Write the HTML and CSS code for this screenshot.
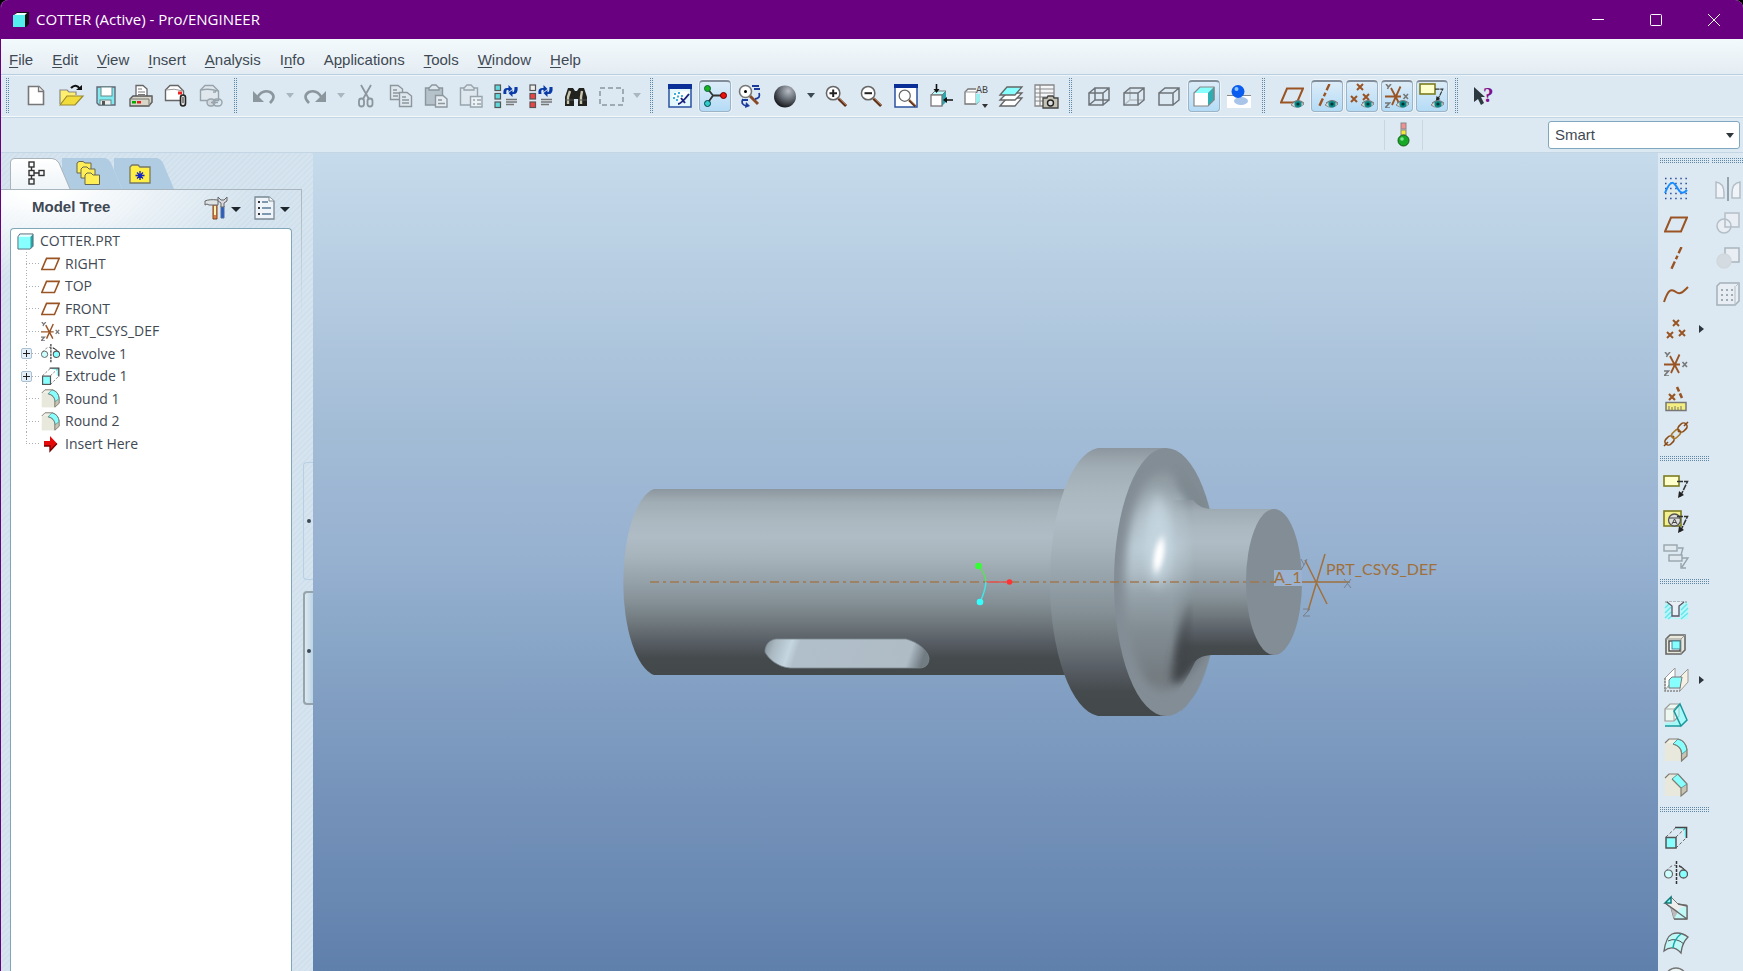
FILE: index.html
```html
<!DOCTYPE html>
<html lang="en">
<head>
<meta charset="utf-8">
<title>COTTER (Active) - Pro/ENGINEER</title>
<link rel="stylesheet" href="styles.css">
</head>
<body>
<svg class="defs" aria-hidden="true">
  <symbol id="eye" viewBox="0 0 14 10"><path d="M0 6Q6-1 13 5Q7 11 0 6Z" fill="#ddd" stroke="#888" /><circle cx="7" cy="5" r="3.6" fill="#0a8a8a"/><circle cx="7" cy="5" r="1.6" fill="#033"/><path d="M1 4Q7-1 13 4" fill="none" stroke="#777"/></symbol>
  <symbol id="plane" viewBox="0 0 24 24"><path d="M7 5.500H23L17 19.500H1Z" fill="none" stroke="#9a5424" stroke-width="2"/></symbol>
  <symbol id="csys" viewBox="0 0 24 24"><g fill="none" stroke="#9a5424" stroke-width="1.800"><path d="M0 12.500H16M6 4L15 21M15.500 2.500L7 21"/></g><g fill="none" stroke="#777" stroke-width="1.600"><path d="M1 0L3.500 3L6 0M3.500 3L2.500 5M18.500 10L23 15M23 10L18.500 15M0 19H4.500L0 24H5"/></g></symbol>
  <symbol id="axis" viewBox="0 0 24 24"><path d="M17.500 0L6.500 24" stroke="#9a5424" stroke-width="2.400" stroke-dasharray="7 2.500 4 2.500 8" fill="none"/></symbol>
  <symbol id="points" viewBox="0 0 24 24"><path d="M9 3L15 9M15 3L9 9M3 15L9 21M9 15L3 21M15 13L21 19M21 13L15 19" stroke="#9a5424" stroke-width="2" fill="none"/></symbol>
  <symbol id="extrude" viewBox="0 0 24 24"><path d="M11 2H22V12L20 10V4Z" fill="#8ff"/><path d="M11 1.500H22.500V12" fill="none" stroke="#444" stroke-width="1.600"/><path d="M2 11L12 1.500M12 11L22 1.500M12 22L22 12" fill="none" stroke="#666" stroke-dasharray="3 2"/><rect x="2" y="11.500" width="10" height="10.500" fill="#8ff" stroke="#555" stroke-width="1.500"/></symbol>
  <symbol id="revolve" viewBox="0 0 24 24"><path d="M2 10Q9 2 13 5Q19 5 23 12" fill="none" stroke="#666" stroke-dasharray="3 2"/><path d="M15 4Q20 6 24 13L20 9Q17 6 15 6Z" fill="#444"/><circle cx="4.500" cy="13" r="4" fill="#cff" stroke="#666" stroke-width="1.200"/><circle cx="19.500" cy="13" r="4" fill="#8ff" stroke="#555" stroke-width="1.300"/><path d="M12.500 0V24" stroke="#333" stroke-width="1.500" stroke-dasharray="3 1"/></symbol>
  <symbol id="round" viewBox="0 0 24 24"><path d="M1 5L5 1H12Q22 3 23 12V18L17 23H1Z" fill="#f0f0e6"/><path d="M1 5H8Q17 8 17 15V23H1Z" fill="#e8e8dc"/><path d="M17 15L23 11V18L17 23Z" fill="#c8c4b4"/><path d="M9 6L14 1Q22 3 23 12L18 16Q17 8 9 6Z" fill="#8ff" stroke="#55a0a0"/><path d="M1 5L5 1H14M9 6Q17 8 17.500 15V23L23 18V12Q22 3 14 1" fill="none" stroke="#807c72" stroke-width="1.200"/></symbol>
  <symbol id="chamfer" viewBox="0 0 24 24"><path d="M1 5L5 1H14L23 11V18L17 23H1Z" fill="#e8e8dc"/><path d="M17 15L23 11V18L17 23Z" fill="#c8c4b4"/><path d="M8 6L14 1L23 11L17 15Z" fill="#8ff" stroke="#55a0a0"/><path d="M1 5L5 1H14L23 11V18L17 23V15L8 6" fill="none" stroke="#807c72" stroke-width="1.200"/></symbol>
  <symbol id="part" viewBox="0 0 18 18"><path d="M14 4L17 1V14L14 17Z" fill="#2aa"/><path d="M1 4L3 1H17L14 4Z" fill="#e8ffff"/><rect x="1" y="4" width="13" height="13" fill="#8ff"/><path d="M1 17V4L3 1H17V14L14 17Z" fill="none" stroke="#567" stroke-width="1"/></symbol>
  <symbol id="lens" viewBox="0 0 24 24"><path d="M14 14L22 22" stroke="#5c3018" stroke-width="3"/><path d="M14 13L22 21" stroke="#b87850" stroke-width="1"/><circle cx="8.500" cy="8.500" r="7" fill="#fff" stroke="#666" stroke-width="1.600"/></symbol>
  <symbol id="arrows" viewBox="0 0 16 14"><path d="M1 10Q0 3 6 4V1L10 5L6 8V6Q3 5 4 10Z M15 3Q16 11 10 10V13L6 9L10 6V8Q12 9 12 3Z" fill="#0a3aa8"/></symbol>
  <symbol id="leader" viewBox="0 0 12 19"><path d="M0 1.500H10.500L3 17" fill="none" stroke="#333" stroke-width="1.500" stroke-dasharray="6 1"/><path d="M1 18L2 11L7 15Z" fill="#222"/></symbol>
</svg>

<div class="app">
<header class="titlebar">
  <svg class="app-icon" viewBox="0 0 18 18"><path d="M2 4L5 1H17V13L14 16H2Z" fill="#111"/><path d="M2 4L5 2H15L13 4Z" fill="#eff"/><rect x="1" y="4" width="12" height="12" fill="#5ee"/></svg>
  <h1 class="title">COTTER (Active) - Pro/ENGINEER</h1>
  <div class="window-controls">
    <button aria-label="Minimize"><svg viewBox="0 0 12 12"><path d="M0 5.500H12"/></svg></button>
    <button aria-label="Maximize"><svg viewBox="0 0 12 12"><rect x=".5" y=".5" width="11" height="11" rx="1"/></svg></button>
    <button aria-label="Close"><svg viewBox="0 0 12 12"><path d="M0 0L12 12M12 0L0 12"/></svg></button>
  </div>
</header>

<nav class="menubar">
  <button><u>F</u>ile</button><button><u>E</u>dit</button><button><u>V</u>iew</button><button><u>I</u>nsert</button><button><u>A</u>nalysis</button><button>I<u>n</u>fo</button><button>A<u>p</u>plications</button><button><u>T</u>ools</button><button><u>W</u>indow</button><button><u>H</u>elp</button>
</nav>

<div class="toolbar" role="toolbar" aria-label="Main toolbar">
  <span class="grip"></span>
  <button class="tool" aria-label="New"><svg viewBox="0 0 24 24"><path d="M4.500 2.500H15L19.500 7V20.500H4.500Z" fill="#fff" stroke="#777" stroke-width="1.600"/><path d="M14.500 2.500V7.500H19.500" fill="#eee" stroke="#777" stroke-width="1.300"/></svg></button>
  <button class="tool" aria-label="Open"><svg viewBox="0 0 24 24"><path d="M1 20V6H8L10 8H17V11" fill="#ffef70" stroke="#888" stroke-width="1.200"/><path d="M1 21L8 12H24L16 21Z" fill="#f2dc3c" stroke="#998a30" stroke-width="1.200"/><path d="M12 4Q17-1 21 5" fill="none" stroke="#111" stroke-width="2.200"/><path d="M17 6H23V1Z" fill="#111"/></svg></button>
  <button class="tool" aria-label="Save"><svg viewBox="0 0 24 24"><path d="M3 3H21V21H5L3 19Z" fill="#7feaf0" stroke="#667" stroke-width="1.400"/><rect x="7" y="3" width="11" height="9" fill="#fff" stroke="#688"/><rect x="6" y="16" width="11" height="5" fill="#eee" stroke="#688"/><rect x="8" y="17" width="3" height="4" fill="#555"/></svg></button>
  <button class="tool" aria-label="Print"><svg viewBox="0 0 24 24"><path d="M7 13V1.500H14L18 5V13Z" fill="#fff" stroke="#666" stroke-width="1.300"/><path d="M9 5H13M9 8H16M9 10.500H16" stroke="#777"/><path d="M1 15L4 12H23V18L20 22H1Z" fill="#d8d6c8" stroke="#555" stroke-width="1.300"/><path d="M1 15H20V22L23 19V12" fill="none" stroke="#777"/><rect x="3" y="17" width="4" height="2.500" fill="#0a0"/><rect x="8" y="17" width="4" height="2.500" fill="#d22"/></svg></button>
  <button class="tool" aria-label="Send with attachment"><svg viewBox="0 0 24 24"><path d="M1.500 6L6 1.500H14L19.500 7V16.500H1.500Z" fill="#fff" stroke="#666" stroke-width="1.400"/><path d="M2 6Q10 4 19 7" fill="none" stroke="#999"/><rect x="14" y="7.500" width="4" height="3" fill="#e22"/><rect x="16.500" y="11" width="5" height="11" rx="2.500" fill="#ddd" stroke="#222" stroke-width="1.600"/><path d="M19 13V19" stroke="#333"/></svg></button>
  <button class="tool" aria-label="Send as link"><svg viewBox="0 0 24 24" fill="none" stroke="#98a4ac" stroke-width="1.400"><path d="M1.500 6L6 1.500H14L19.500 7V16.500H1.500Z" fill="#e0e8ee"/><path d="M2 6Q10 4 19 7M14 8H17"/><rect x="8" y="15" width="8" height="7" rx="3.500" fill="#d0d8de"/><rect x="14" y="15" width="9" height="7" rx="3.500"/><path d="M12 18.500H19"/></svg></button>
  <span class="grip"></span>
  <button class="tool" aria-label="Undo"><svg viewBox="0 0 24 24"><path d="M5 14Q10 5 18 8Q25 12 18 19" fill="none" stroke="#8b969d" stroke-width="2.600"/><path d="M1 7V18H12Z" fill="#8b969d"/></svg></button>
  <button class="drop faded" aria-label="Undo list"></button>
  <button class="tool" aria-label="Redo"><svg viewBox="0 0 24 24"><path d="M19 14Q14 5 6 8Q-1 12 6 19" fill="none" stroke="#8b969d" stroke-width="2.600"/><path d="M23 7V18H12Z" fill="#8b969d"/></svg></button>
  <button class="drop faded" aria-label="Redo list"></button>
  <button class="tool" aria-label="Cut"><svg viewBox="0 0 24 24" fill="none" stroke="#8b969d" stroke-width="1.800"><path d="M7 1L15 15M17 1L9 15"/><rect x="5" y="14.500" width="5" height="8" rx="2.500"/><rect x="13.500" y="14.500" width="5" height="8" rx="2.500"/></svg></button>
  <button class="tool" aria-label="Copy"><svg viewBox="0 0 24 24" fill="#dfe8ee" stroke="#8b969d" stroke-width="1.400"><path d="M1.500 1.500H9L13.500 5V15.500H1.500Z"/><path d="M4 6H8M4 9H10M4 12H9"/><path d="M10.500 8.500H18L22.500 12V22.500H10.500Z"/><path d="M13 13H17M13 16H20M13 19H20"/></svg></button>
  <button class="tool" aria-label="Paste"><svg viewBox="0 0 24 24" fill="#b6c2ca" stroke="#8b969d" stroke-width="1.400"><path d="M1.500 4H18.500V21H1.500Z"/><path d="M5 6V4L8 1H12L15 4V6Z" fill="#dfe8ee"/><path d="M11.500 11.500H19L23 15V23H11.500Z" fill="#e6edf2"/><path d="M14 16H18M14 19.500H21"/></svg></button>
  <button class="tool" aria-label="Paste special"><svg viewBox="0 0 24 24" fill="#dfe8ee" stroke="#98a4ac" stroke-width="1.400"><path d="M1.500 4H18.500V21H1.500Z"/><path d="M5 6V4L8 1H12L15 4V6Z"/><path d="M11.500 12.500H23V23H11.500Z" fill="#edf2f6"/><path d="M14 16H16M18 16H22M14 20H16M18 20H22"/></svg></button>
  <button class="tool" aria-label="Regenerate"><svg viewBox="0 0 24 24"><g fill="#5fd8dc" stroke="#555" stroke-width="1.200"><rect x="1" y="1" width="5.500" height="5.500"/><rect x="1" y="9.500" width="5.500" height="5.500"/><rect x="1" y="18" width="5.500" height="5.500"/></g><use href="#arrows" x="8" y="0" width="17" height="14"/><path d="M12 15.500H23M12 18H23M12 20.500H20" stroke="#777" stroke-width="1.300"/></svg></button>
  <button class="tool" aria-label="Custom regenerate"><svg viewBox="0 0 24 24"><g stroke="#555" stroke-width="1.200"><rect x="1" y="1" width="5.500" height="5.500" fill="#eee"/><rect x="1" y="9.500" width="5.500" height="5.500" fill="#e44"/><rect x="1" y="18" width="5.500" height="5.500" fill="#e44"/></g><use href="#arrows" x="8" y="0" width="17" height="14"/><path d="M12 15.500H23M12 18H23M12 20.500H20" stroke="#777" stroke-width="1.300"/></svg></button>
  <button class="tool" aria-label="Find"><svg viewBox="0 0 24 24"><path d="M1 22V13L4 4H9L11 7H13L15 4H20L23 13V22H14V15H10V22Z" fill="#22221e"/><path d="M4 20V13L6 7M17 20V13L18 7" stroke="#c9c7b0" stroke-width="2.400" fill="none"/><path d="M1 16H10M14 16H23" stroke="#555"/></svg></button>
  <button class="tool" aria-label="Select"><svg viewBox="0 0 24 24"><rect x="1" y="4" width="23" height="17" fill="none" stroke="#8b969d" stroke-width="1.500" stroke-dasharray="5 3"/></svg></button>
  <button class="drop faded" aria-label="Selection list"></button>
  <span class="grip"></span>
  <button class="tool" aria-label="Repaint"><svg viewBox="0 0 24 24"><rect x="1" y="1" width="22" height="22" fill="#e4f7fc" stroke="#2a52a0" stroke-width="1.500"/><path d="M0 0H24V5H0Z" fill="#0a3098"/><path d="M5 9Q14 6 21 8L19 12L12 21Q8 13 4 15Z" fill="#fff"/><path d="M6 10h2M10 9h2M9 12.500h2M5 14h2M8 16h2M13 12h2" stroke="#3ab0e0" stroke-width="1.800"/><path d="M10 20Q13 20 21 10M13 14L17 19" fill="none" stroke="#1a2480" stroke-width="2"/></svg></button>
  <button class="tool on" aria-label="Spin center" aria-pressed="true"><svg viewBox="0 0 24 24"><path d="M4 4L10 11.500L4 20M10 11.500H20" fill="none" stroke="#333" stroke-width="1.800"/><circle cx="4.500" cy="4.500" r="3" fill="#1cb21c" stroke="#064" /><circle cx="4.500" cy="19.500" r="3" fill="#3cc" stroke="#044"/><circle cx="20.500" cy="11.500" r="3" fill="#e11" stroke="#600"/></svg></button>
  <button class="tool" aria-label="Orient mode"><svg viewBox="0 0 24 24"><path d="M12 12L20 20" stroke="#8a4a28" stroke-width="3"/><circle cx="7.500" cy="7.500" r="6" fill="#fff" stroke="#777" stroke-width="1.600"/><circle cx="7.500" cy="7.500" r="1.500"/><path d="M14 2H21M16 5H22M21 9Q23 14 17 15M5 15Q2 20 8 22M5 16H10" fill="none" stroke="#1a3a9c" stroke-width="1.800"/><path d="M8 18L12 22L7 24Z" fill="#1a3a9c"/></svg></button>
  <button class="tool" aria-label="Appearance gallery"><svg viewBox="0 0 24 24"><defs><radialGradient id="ball" cx=".65" cy=".25" r=".8"><stop offset="0" stop-color="#b8bec4"/><stop offset=".5" stop-color="#666c74"/><stop offset="1" stop-color="#101216"/></radialGradient></defs><circle cx="12" cy="12.500" r="11" fill="url(#ball)"/></svg></button>
  <button class="drop" aria-label="Appearance list"></button>
  <button class="tool" aria-label="Zoom in"><svg viewBox="0 0 24 24"><use href="#lens" x="1" y="1" width="23" height="23"/><path d="M5.500 9.200H13M9.200 5.500V13" stroke="#222" stroke-width="2"/></svg></button>
  <button class="tool" aria-label="Zoom out"><svg viewBox="0 0 24 24"><use href="#lens" x="1" y="1" width="23" height="23"/><path d="M5.500 9.200H13" stroke="#222" stroke-width="2"/></svg></button>
  <button class="tool" aria-label="Refit"><svg viewBox="0 0 24 24"><rect x="1" y="1" width="22" height="22" fill="#fff" stroke="#2a52a0" stroke-width="1.500"/><path d="M0 0H24V4H0Z" fill="#0a3098"/><use href="#lens" x="4" y="5" width="19" height="19"/></svg></button>
  <button class="tool" aria-label="Reorient"><svg viewBox="0 0 24 24"><path d="M13 11L17 7V18L13 22" fill="#2aa8b0"/><path d="M2 11L6 7H17L13 11Z" fill="#bff" stroke="#777"/><rect x="2" y="11" width="11" height="11" fill="#fff" stroke="#777" stroke-width="1.300"/><path d="M7.500 0V7M24 16H17" stroke="#111" stroke-width="1.600"/><path d="M4.500 5H10.500L7.500 9ZM18 13V19L14 16Z" fill="#111"/></svg></button>
  <button class="tool" aria-label="Saved view list"><svg viewBox="0 0 24 24"><path d="M1 8L4 5H15V17L12 20H1Z" fill="#fff" stroke="#777" stroke-width="1.300"/><path d="M1 8H12V20" fill="none" stroke="#999"/><path d="M12 8L16 6V17L12 20Z" fill="#9ee"/><rect x="12" y="0" width="13" height="10" fill="#dce9f2"/><text x="12" y="9" class="ab">AB</text><path d="M18 20H24L21 24Z" fill="#333"/></svg></button>
  <button class="tool" aria-label="Layers"><svg viewBox="0 0 24 24" stroke="#666" stroke-width="1.300" fill="#fff"><path d="M1 22L8 14H23L16 22Z"/><path d="M1 16L8 9H23L16 16Z"/><path d="M1 11L8 3H23L16 11Z" fill="#8ff"/></svg></button>
  <button class="tool" aria-label="View manager"><svg viewBox="0 0 24 24"><path d="M1 1H20V22H1Z" fill="#f4f6f8" stroke="#888" stroke-width="1.300"/><path d="M6 1V22M1 5H20M1 9H20M1 13H20M1 17H20" stroke="#888" stroke-width="1.200"/><path d="M9 14H13L14 12H19L20 14H24V24H9Z" fill="#c4c2b4" stroke="#444" stroke-width="1.300"/><circle cx="16.500" cy="19" r="3" fill="#ddd" stroke="#222" stroke-width="1.400"/></svg></button>
  <span class="grip"></span>
  <button class="tool" aria-label="Wireframe"><svg viewBox="0 0 24 24" fill="none" stroke="#6d747a" stroke-width="1.500"><path d="M2 9H16V21H2ZM8 4H22V16H8ZM2 9L8 4M16 9L22 4M16 21L22 16M2 21L8 16"/></svg></button>
  <button class="tool" aria-label="Hidden line"><svg viewBox="0 0 24 24" fill="none" stroke="#6d747a" stroke-width="1.500"><path d="M8 4V16H22M2 21L8 16" stroke="#b4bcc2"/><path d="M2 9H16V21H2ZM2 9L8 4H22V16L16 21M16 9L22 4"/></svg></button>
  <button class="tool" aria-label="No hidden"><svg viewBox="0 0 24 24" fill="none" stroke="#6d747a" stroke-width="1.500"><path d="M2 9H16V21H2ZM2 9L8 4H22V16L16 21M16 9L22 4"/></svg></button>
  <button class="tool on" aria-label="Shading" aria-pressed="true"><svg viewBox="0 0 24 24"><path d="M16 9L22 3V16L16 22" fill="#2ab0b4" stroke="#777"/><path d="M2 9L8 3H22L16 9Z" fill="#8ff"/><path d="M2 9H16V22H2Z" fill="#fff"/><path d="M2 9L8 3H22V16L16 22H2Z" fill="none" stroke="#888" stroke-width="1.200"/></svg></button>
  <button class="tool" aria-label="Enhanced realism"><svg viewBox="0 0 24 24"><path d="M0 12H24V24H0Z" fill="#fff"/><path d="M0 11.500H24" stroke="#888"/><ellipse cx="14" cy="17" rx="7" ry="4" fill="#a8c4e8"/><circle cx="11" cy="7.500" r="6.500" fill="#0a5cf0"/><circle cx="9.500" cy="5" r="2" fill="#8cc8ff"/></svg></button>
  <span class="grip"></span>
  <button class="tool" aria-label="Plane display"><svg viewBox="0 0 24 24"><use href="#plane" x="0" y="-1" width="24" height="24"/><use href="#eye" x="11" y="15" width="14" height="10"/></svg></button>
  <button class="tool on" aria-label="Axis display" aria-pressed="true"><svg viewBox="0 0 24 24"><use href="#axis" x="-3" y="0" width="24" height="24"/><use href="#eye" x="10" y="15" width="14" height="10"/></svg></button>
  <button class="tool on" aria-label="Point display" aria-pressed="true"><svg viewBox="0 0 24 24"><use href="#points" x="-2" y="-3" width="24" height="24"/><use href="#eye" x="11" y="15" width="14" height="10"/></svg></button>
  <button class="tool on" aria-label="Coordinate system display" aria-pressed="true"><svg viewBox="0 0 24 24"><use href="#csys" x="0" y="0" width="24" height="24"/><use href="#eye" x="11" y="15" width="14" height="10"/></svg></button>
  <button class="tool on" aria-label="Annotation display" aria-pressed="true"><svg viewBox="0 0 24 24"><rect x="0" y="0" width="15" height="10" fill="#ffc" stroke="#7c7c20" stroke-width="1.600"/><use href="#leader" x="14" y="4" width="11" height="14"/><use href="#eye" x="11" y="15" width="14" height="10"/></svg></button>
  <span class="grip"></span>
  <button class="tool" aria-label="Context help"><svg viewBox="0 0 24 24"><path d="M1 3V18L5 15L8 21L11 19L8 13H12Z" fill="#2c3a40"/><text x="10" y="18" class="qmark">?</text></svg></button>
</div>

<div class="messagebar">
  <div class="status"><svg viewBox="0 0 14 26"><rect x="4" y="1" width="5" height="6" fill="#f09090" stroke="#888"/><rect x="4" y="8" width="5" height="5" fill="#f4e830" stroke="#888"/><circle cx="6.500" cy="18.500" r="5.500" fill="#18a828" stroke="#145c18"/><circle cx="5" cy="17" r="1.800" fill="#7ce88c"/></svg></div>
  <div class="filter"><select aria-label="Selection filter"><option>Smart</option></select></div>
</div>

<main class="workspace">
  <aside class="navigator">
    <div class="tabs" role="tablist">
      <button class="tab selected" role="tab" aria-label="Model tree"><svg class="tab-shape" viewBox="0 0 58 31"><path d="M.5 31V5Q.5 .5 5 .5H42Q46 .5 49 5L60 31" fill="url(#tabfill)" stroke="#a9b3ba"/><defs><linearGradient id="tabfill" x1="0" y1="0" x2="0" y2="1"><stop offset="0" stop-color="#fff"/><stop offset="1" stop-color="#eef4f8"/></linearGradient></defs></svg><svg class="tab-icon" viewBox="0 0 24 24" fill="none" stroke="#333" stroke-width="1.400"><rect x="5" y="1" width="5" height="5"/><rect x="5" y="9.500" width="5" height="5"/><rect x="5" y="18" width="5" height="5"/><rect x="15" y="9.500" width="5" height="5"/><path d="M7.500 6V9.500M7.500 14.500V18M10 12H15"/></svg></button>
      <button class="tab" role="tab" aria-label="Folder browser"><svg class="tab-shape" viewBox="0 0 58 31"><path d="M0 0H42Q46 0 49 5L60 31H8L0 12Z" fill="#b0cce2"/></svg><svg class="tab-icon" viewBox="0 0 24 24" fill="#ffee55" stroke="#665" stroke-width="1"><path d="M1 2L3 .500H7L9 2H15V12H1Z"/><path d="M5 8L7 6H11L13 8H19V17H5Z"/><path d="M9 14L11 12H15L17 14H23.500V23.500H9Z"/></svg></button>
      <button class="tab" role="tab" aria-label="Favorites"><svg class="tab-shape" viewBox="0 0 58 31"><path d="M0 0H42Q46 0 49 5L60 31H8L0 12Z" fill="#b0cce2"/></svg><svg class="tab-icon" viewBox="0 0 24 24"><path d="M2 22V6L4 4H10L12 6H22V22Z" fill="#ffee44" stroke="#776" stroke-width="1.300"/><path d="M12 10V19M7.500 14.500H16.500M9 11.500L15 17.500M15 11.500L9 17.500" stroke="#1424c0" stroke-width="1.300"/></svg></button>
    </div>
    <section class="panel">
      <div class="panel-head">
        <h2>Model Tree</h2>
        <button class="head-tool" aria-label="Settings"><svg viewBox="0 0 24 24"><path d="M9 8H13V23H9Z" fill="#e08040" stroke="#7a4020"/><path d="M11 10V19" stroke="#fff0b0" stroke-width="2"/><path d="M1 5Q5 3 14 4V9H5Q3 7 1 9Z" fill="#dde2e4" stroke="#666"/><path d="M17 10H20V22H17Z" fill="#2a5cc0" stroke="#4a6ca0"/><path d="M14 1V5L17 7V11H20V7L23 5V1L20 4H17Z" fill="#d8d8e0" stroke="#666"/></svg></button>
        <button class="drop dark" aria-label="Settings menu"></button>
        <button class="head-tool list" aria-label="Show"><svg viewBox="0 0 24 24"><path d="M2 1H16L21 5V23H2Z" fill="#eef4fa" stroke="#7a8894" stroke-width="1.300"/><path d="M16 1V5H21" fill="#fff" stroke="#7a8894"/><path d="M5 6H7M5 12H7M5 18H7" stroke="#333" stroke-width="2.200"/><path d="M9 6H15M9 12H18M9 18H18" stroke="#5a7a98" stroke-width="1.300"/></svg></button>
        <button class="drop dark" aria-label="Show menu"></button>
      </div>
      <ul class="tree">
        <li class="root"><svg class="ti" viewBox="0 0 18 18"><use href="#part"/></svg>COTTER.PRT</li>
        <li><svg class="ti"><use href="#plane"/></svg>RIGHT</li>
        <li><svg class="ti"><use href="#plane"/></svg>TOP</li>
        <li><svg class="ti"><use href="#plane"/></svg>FRONT</li>
        <li><svg class="ti"><use href="#csys"/></svg>PRT_CSYS_DEF</li>
        <li><button class="expand" aria-label="Expand Revolve 1"></button><svg class="ti"><use href="#revolve"/></svg>Revolve 1</li>
        <li><button class="expand" aria-label="Expand Extrude 1"></button><svg class="ti"><use href="#extrude"/></svg>Extrude 1</li>
        <li><svg class="ti"><use href="#round"/></svg>Round 1</li>
        <li><svg class="ti"><use href="#round"/></svg>Round 2</li>
        <li class="last"><svg class="ti" viewBox="0 0 19 19"><path d="M3 7H9V2L16 9.500L9 17V12H3Z" fill="#e40a0a"/><path d="M3 12H9V17L16 9.500" fill="none" stroke="#700" stroke-width="1.300"/></svg>Insert Here</li>
      </ul>
    </section>
    <div class="splitter"><button class="handle" aria-label="Collapse navigator"></button><button class="handle strong" aria-label="Open browser"></button></div>
  </aside>

  <section class="viewport" aria-label="Model view">
    <svg class="scene" viewBox="313 153 1345 818">
      <defs>
        <linearGradient id="barrel" x1="0" y1="0" x2="0" y2="1">
          <stop offset="0" stop-color="#8c969e"/><stop offset=".07" stop-color="#a1adb4"/><stop offset=".17" stop-color="#abb8c0"/><stop offset=".26" stop-color="#afbcc6"/><stop offset=".36" stop-color="#a7b4bb"/><stop offset=".5" stop-color="#95a1a8"/><stop offset=".61" stop-color="#849096"/><stop offset=".72" stop-color="#6f787c"/><stop offset=".82" stop-color="#585e65"/><stop offset=".91" stop-color="#454a4d"/><stop offset="1" stop-color="#43484b"/>
        </linearGradient>
        <linearGradient id="slot" x1="0" y1="0" x2="1" y2=".06">
          <stop offset="0" stop-color="#828e96"/><stop offset=".07" stop-color="#a9b8c1"/><stop offset=".17" stop-color="#c5d6e1"/><stop offset=".22" stop-color="#b1bfca"/><stop offset=".91" stop-color="#afbcc6"/><stop offset="1" stop-color="#717b82"/>
        </linearGradient>
        <linearGradient id="bell" gradientUnits="userSpaceOnUse" x1="0" y1="460" x2="0" y2="704">
          <stop offset="0" stop-color="#838d95"/><stop offset=".12" stop-color="#97a3aa"/><stop offset=".24" stop-color="#b2c0c9"/><stop offset=".36" stop-color="#bccdd7"/><stop offset=".46" stop-color="#b0bec7"/><stop offset=".54" stop-color="#98a5ac"/><stop offset=".7" stop-color="#818c92"/><stop offset=".9" stop-color="#737b80"/><stop offset="1" stop-color="#838d95"/>
        </linearGradient>
        <linearGradient id="fade" gradientUnits="userSpaceOnUse" x1="1172" y1="0" x2="1194" y2="0"><stop offset="0" stop-color="#000"/><stop offset="1" stop-color="#fff"/></linearGradient>
        <mask id="neckmask" maskUnits="userSpaceOnUse" x="1160" y="480" width="150" height="200"><rect x="1160" y="480" width="150" height="200" fill="url(#fade)"/></mask>
        <filter id="b3" x="-80%" y="-50%" width="260%" height="200%"><feGaussianBlur stdDeviation="2 4"/></filter>
        <filter id="b4" x="-50%" y="-50%" width="200%" height="200%"><feGaussianBlur stdDeviation="4"/></filter>
        <filter id="b6" x="-80%" y="-50%" width="260%" height="200%"><feGaussianBlur stdDeviation="5 8"/></filter>
        <clipPath id="face"><path d="M1166 448A52 134 0 0 0 1166 716C1184 716 1200 696 1210 657L1210 509C1200 470 1184 448 1166 448Z"/></clipPath>
      </defs>
      <path d="M654 489H1070V675H654A36 94 0 0 1 654 489Z" fill="url(#barrel)"/>
      <path d="M776 639H906C918 642 928 651 929 658C929 664 926 668 919 668H790C777 667 768 658 765 652C765 645 769 640 776 639Z" fill="url(#slot)" stroke="#7e8a91" stroke-width=".8"/>
      <path d="M1098 448H1166V716H1098A52 134.400 0 0 1 1098 448Z" fill="url(#barrel)"/>
      <ellipse cx="1166" cy="582" rx="52" ry="134" fill="#838d95"/>
      <g clip-path="url(#face)">
        <ellipse cx="1163" cy="582" rx="38" ry="110" fill="url(#bell)" filter="url(#b4)"/>
        <ellipse cx="1158" cy="540" rx="13" ry="44" fill="#c8d9e3" opacity=".75" filter="url(#b6)"/>
        <path d="M1180 470L1205 500V512H1194Q1184 496 1176 486Z" fill="#7c878e" opacity=".8" filter="url(#b4)"/>
        <path d="M1192 602C1182 622 1170 664 1172 682C1180 688 1196 668 1208 650V602Z" fill="#404548" filter="url(#b4)"/>
        <path d="M1210 655Q1200 655 1195 662Q1184 686 1170 700L1182 712L1214 670Z" fill="#838d95" opacity=".7"/>
      </g>
      <path d="M1160 500H1193Q1200 509 1212 509H1274V655H1212Q1202 655 1194 661H1160Z" fill="url(#barrel)" mask="url(#neckmask)"/>
      <ellipse cx="1159" cy="555" rx="5" ry="17" fill="#fff" transform="rotate(10 1159 555)" filter="url(#b3)"/>
      <ellipse cx="1274" cy="582" rx="28" ry="73" fill="#838d95"/>
      <rect x="1274" y="570" width="28" height="16" fill="#9ab2cf"/>
      <path d="M650 582H1276" stroke="#a07850" stroke-width="1.600" stroke-dasharray="9 4 3 4" fill="none"/>
      <text x="1274" y="583" class="note">A_1</text>
      <path d="M1302 582H1350M1305 560L1327 604M1325 554L1308 611" fill="none" stroke="#a0703c" stroke-width="1.500"/>
      <g fill="none" stroke="#78808c" stroke-width="1"><path d="M1301 559L1304 565L1307 559M1304 565L1301 570M1344 579L1351 588M1351 579L1344 588M1303 609H1310L1303 616H1310"/></g>
      <text x="1326" y="575" class="note">PRT_CSYS_DEF</text>
      <g fill="none" stroke-width="1.500"><path d="M978 566Q985 572 986 582" stroke="#5be05b"/><path d="M986 582H1009" stroke="#e05858"/><path d="M986 582Q985 592 980 602" stroke="#40e8e8"/></g>
      <circle cx="978.500" cy="566" r="3.300" fill="#3f3"/><circle cx="1009.500" cy="582" r="2.800" fill="#f33"/><circle cx="980" cy="602" r="3.300" fill="#3ff"/>
    </svg>
  </section>

  <aside class="feature-tools">
    <div class="column" role="toolbar" aria-label="Feature toolbar">
      <span class="grip-h"></span>
      <button class="tool" aria-label="Sketch"><svg viewBox="0 0 24 24"><path d="M1 1.500H23M1 6.500H23M1 11.500H23M1 16.500H23M1 21.500H23" stroke="#2a4a9c" stroke-width="1.500" stroke-dasharray="1.500 3.600"/><path d="M1 16C7 1 10 5 14 12Q18 19 23 13" fill="none" stroke="#1a8cff" stroke-width="2"/></svg></button>
      <button class="tool" aria-label="Datum plane"><svg><use href="#plane"/></svg></button>
      <button class="tool" aria-label="Datum axis"><svg><use href="#axis"/></svg></button>
      <button class="tool" aria-label="Datum curve"><svg viewBox="0 0 24 24"><path d="M0 20C4 8 7 6 12 10C16 13 19 10 24 5" fill="none" stroke="#9a5424" stroke-width="2"/></svg></button>
      <div class="pair"><button class="tool" aria-label="Datum point"><svg><use href="#points"/></svg></button><button class="flyout" aria-label="More datum points"></button></div>
      <button class="tool" aria-label="Coordinate system"><svg><use href="#csys"/></svg></button>
      <button class="tool" aria-label="Analysis feature"><svg viewBox="0 0 24 24"><path d="M5 7L11 13M11 7L5 13" stroke="#9a5424" stroke-width="2.200"/><path d="M13 0L18 11" stroke="#9a5424" stroke-width="2.600" stroke-dasharray="5 2"/><rect x="2" y="15.500" width="20" height="8" fill="#f4ee80" stroke="#777" stroke-width="1.500"/><path d="M5 19V23M8 20V23M11 19V23M14 20V23M17 19V23" stroke="#776"/></svg></button>
      <button class="tool" aria-label="Reference"><svg viewBox="0 0 24 24" fill="none" stroke="#8a4a18" stroke-width="1.600"><path d="M0 24L4 20M20 4L24 0M8 16L10 14M14 10L16 8"/><rect x="-5" y="-3.500" width="10" height="7" rx="3.500" transform="translate(5.500 18.500) rotate(-45)"/><rect x="-5" y="-3" width="10" height="6" rx="3" transform="translate(12 12) rotate(-45)" stroke="#a87828"/><rect x="-5" y="-3.500" width="10" height="7" rx="3.500" transform="translate(18.500 5.500) rotate(-45)"/></svg></button>
      <span class="grip-h"></span>
      <button class="tool" aria-label="Annotation"><svg viewBox="0 0 24 24"><rect x="0" y="1" width="15" height="10" fill="#ffc" stroke="#7c7c20" stroke-width="1.600"/><use href="#leader" x="13" y="5" width="12" height="19"/></svg></button>
      <button class="tool" aria-label="Annotation feature"><svg viewBox="0 0 24 24"><rect x="0" y="1" width="17" height="15" fill="#f4f090" stroke="#7c7c20" stroke-width="1.600"/><circle cx="10.500" cy="10" r="6" fill="#ddd" stroke="#555" stroke-width="1.300"/><path d="M5 8H16M8 14L10.500 9L13 14M9 12.500H12" fill="none" stroke="#444"/><use href="#leader" x="13" y="5" width="12" height="19"/></svg></button>
      <button class="tool" aria-label="Annotation element"><svg viewBox="0 0 24 24" fill="#dfe8ee" stroke="#98a4ac" stroke-width="1.400"><path d="M14 3H19L17 10" fill="none"/><rect x="0" y="0" width="13" height="6"/><rect x="5" y="10" width="13" height="6"/><path d="M18 13H24L18 22M17 18V23H22" fill="none"/></svg></button>
      <span class="grip-h"></span>
      <button class="tool" aria-label="Hole"><svg viewBox="0 0 24 24"><path d="M1 4L7 8V20H16V8L22 4H24V21H1Z" fill="#b6f8fa"/><path d="M1 10L5 6M1 15L7 9M1 20L7 14M4 21L9 17M17 12L23 6M17 17L24 10M17 21L24 15" stroke="#68e4ec" stroke-width="1.500"/><path d="M1 4H23" stroke="#888" stroke-dasharray="3 1"/><path d="M3 4L8 8V18H15V8L20 4" fill="#e8f0f6" stroke="#556" stroke-width="1.300"/></svg></button>
      <button class="tool" aria-label="Shell"><svg viewBox="0 0 24 24"><path d="M2 6L6 2H21V17L17 21H2Z" fill="#e8e8dc" stroke="#666" stroke-width="1.600"/><path d="M2 6H17V21M17 6L21 2" fill="none" stroke="#999"/><rect x="5" y="8" width="11" height="10" fill="#fff" stroke="#555" stroke-width="1.500"/><rect x="8" y="8" width="8" height="8" fill="#8ff" stroke="#489" /></svg></button>
      <div class="pair"><button class="tool" aria-label="Rib"><svg viewBox="0 0 24 24"><path d="M1 10L11 0V10L1 22Z" fill="#fff" stroke="#999"/><path d="M16 9L24 1V14L16 23Z" fill="#f4f0e4" stroke="#999"/><path d="M5 12L8 9H18L16 20H5Z" fill="#8ff" stroke="#777"/><path d="M1 10V23H16" fill="none" stroke="#888" stroke-width="1.500" stroke-dasharray="2 1"/></svg></button><button class="flyout" aria-label="More ribs"></button></div>
      <button class="tool" aria-label="Draft"><svg viewBox="0 0 24 24"><path d="M1 23L1 20L10 19L16 1L23 17L17 23Z" fill="#a8f8f8"/><path d="M1 6L6 1H15V13L10 18H1Z" fill="#ecf8f0" stroke="#999" stroke-width="1.200"/><path d="M1 6H10V18M10 6L15 1" fill="none" stroke="#aaa"/><path d="M16 1L23 17L17 23L10 8ZM1 23H17" fill="#a8fcfc" fill-opacity=".6" stroke="#18989c" stroke-width="1.500"/></svg></button>
      <button class="tool" aria-label="Round"><svg><use href="#round"/></svg></button>
      <button class="tool" aria-label="Chamfer"><svg><use href="#chamfer"/></svg></button>
      <span class="grip-h"></span>
      <button class="tool" aria-label="Extrude"><svg><use href="#extrude"/></svg></button>
      <button class="tool" aria-label="Revolve"><svg><use href="#revolve"/></svg></button>
      <button class="tool" aria-label="Sweep blend"><svg viewBox="0 0 24 24"><path d="M7 1L14 8L23 9V23L10 23L7 12L1 7Z" fill="#eee" stroke="#777"/><path d="M1 7L7 12L10 23L22 20Z" fill="#bbb"/><path d="M1 7L7 1V7Z" fill="#8ff" stroke="#177" stroke-width="1.500"/><path d="M10 23L16 12L23 10V23Z" fill="#c0f8f8"/><path d="M1 7L23 23M14 8L23 10V23H10" fill="none" stroke="#666" stroke-width="1.300"/></svg></button>
      <button class="tool" aria-label="Boundary blend"><svg viewBox="0 0 24 24"><path d="M0 20Q2 6 8 3Q16 0 24 6Q18 12 17 22Q9 13 0 20Z" fill="#c0f8f8" stroke="#666" stroke-width="1.300"/><path d="M4 10Q12 6 20 13" fill="none" stroke="#555"/><path d="M9 17Q10 8 17 3" fill="none" stroke="#1aa" stroke-width="1.500"/></svg></button>
      <button class="tool" aria-label="Style"><svg viewBox="0 0 24 24"><path d="M2 8Q6 2 12 2T22 8Q24 16 20 22H3Q0 16 2 8Z" fill="#e8f4f4" stroke="#777" stroke-width="1.400"/></svg></button>
    </div>
    <div class="column second" role="toolbar" aria-label="Edit toolbar">
      <span class="grip-h"></span>
      <button class="tool" aria-label="Mirror"><svg viewBox="0 0 24 24" fill="#f0f4f8" stroke="#b4bec6" stroke-width="1.500"><path d="M0 5Q8 6 8 16V21H0ZM24 5Q16 6 16 16V21H24Z"/><path d="M12 0V24" stroke="#98a4ac" stroke-width="2"/></svg></button>
      <button class="tool" aria-label="Merge"><svg viewBox="0 0 24 24" fill="#e8eef4" stroke="#b4bec6" stroke-width="1.500"><rect x="9" y="1" width="14" height="14"/><circle cx="8" cy="14" r="7"/><path d="M9 7V15H15" fill="none"/></svg></button>
      <button class="tool" aria-label="Trim"><svg viewBox="0 0 24 24" fill="#e8eef4" stroke="#aab4bc" stroke-width="1.500"><rect x="9" y="1" width="14" height="14"/><circle cx="8" cy="14" r="7" fill="#d4dbe1" stroke="#d0d8de"/></svg></button>
      <button class="tool" aria-label="Pattern"><svg viewBox="0 0 24 24"><path d="M1 4L4 1H23V19L19 23H1Z" fill="#e8eef4" stroke="#a4b0b8" stroke-width="1.500"/><path d="M19 4V23M20 4L23 1" stroke="#b4bec6" /><path d="M5 8H17M5 13H17M5 18H17" stroke="#a0acb4" stroke-width="2" stroke-dasharray="2 3"/></svg></button>
    </div>
  </aside>
</main>
</div>
</body>
</html>
```
FILE: styles.css
```css
* { box-sizing: border-box; }
html, body { height: 100%; margin: 0; }
body {
  background: #000;
  color: #3f4954;
  font: 15px/20px "Liberation Sans", Arial, sans-serif;
  overflow: hidden;
}
button {
  appearance: none;
  margin: 0;
  padding: 0;
  border: 0;
  background: none;
  color: inherit;
  font: inherit;
}
.defs { display: none; }

.app {
  display: flex;
  flex-direction: column;
  height: 100vh;
  border-left: 1px solid #68007f;
  border-radius: 8px 8px 0 0;
  background: #dce9f2;
  overflow: hidden;
}

.titlebar {
  display: flex;
  flex: none;
  align-items: center;
  height: 39px;
  padding-left: 11px;
  background: #68007f;
  color: #fff;
}
.app-icon { width: 18px; height: 18px; }
.title {
  flex: 1;
  margin: 0 0 2px 6px;
  font: 15px/20px "Open Sans", "Noto Sans", sans-serif;
}
.window-controls { display: flex; }
.window-controls button {
  display: grid;
  place-items: center;
  width: 58px;
  height: 39px;
}
.window-controls svg {
  width: 12px;
  height: 12px;
  fill: none;
  stroke: #fff;
}

.menubar {
  display: flex;
  flex: none;
  gap: 19px;
  align-items: center;
  height: 36px;
  padding: 6px 8px 0;
  border-bottom: 1px solid #b9cfe0;
  background: linear-gradient(#f3fafc, #e4ecf3);
}
.menubar u { text-underline-offset: 2px; }

.toolbar {
  display: flex;
  flex: none;
  gap: 3px;
  align-items: center;
  height: 42px;
  padding-left: 1px;
  border-bottom: 1px solid #f4f9fc;
  box-shadow: inset 0 1px #eef5fa;
}
.grip {
  flex: none;
  width: 5px;
  height: 35px;
  margin: 0 7px 0 3px;
  background: conic-gradient(#5f86a2 25%, transparent 0) 0 0 / 2px 2px;
}
.tool {
  display: grid;
  flex: none;
  place-items: center;
  width: 32px;
  height: 32px;
  border: 1px solid transparent;
  border-radius: 4px;
}
.tool svg { width: 24px; height: 24px; overflow: visible; }
.tool.on {
  border-color: #9db4c6;
  border-top: 2px solid #828f9a;
  background: linear-gradient(#dcecf8, #b4dbf6);
  box-shadow: 0 0 0 1px #edf5fa;
}
.ab { font: 10px "Liberation Mono", monospace; fill: #444; }
.qmark { font: bold 21px "Liberation Serif", serif; fill: #80108c; }
.drop {
  display: grid;
  flex: none;
  place-items: center;
  width: 13px;
  height: 32px;
}
.drop::after {
  content: "";
  border: 4px solid transparent;
  border-top: 5px solid #3c4a54;
  border-bottom: 0;
}
.drop.faded::after { border-top-color: #a9b7c1; }
.drop.dark { width: 12px; }
.drop.dark::after { border-width: 5px 5px 0; border-top-color: #1c262c; }

.messagebar {
  display: flex;
  flex: none;
  justify-content: flex-end;
  height: 36px;
  padding: 2px 3px 2px 0;
  border-top: 1px solid #c4d6e3;
  border-bottom: 1px solid #c4d6e3;
}
.status {
  display: grid;
  place-items: center;
  width: 39px;
  margin-right: 125px;
  border: solid #c8d6e0;
  border-width: 0 1px;
}
.status svg { width: 14px; height: 26px; }
.filter { display: flex; align-items: center; position: relative; }
.filter select {
  appearance: none;
  width: 192px;
  height: 28px;
  padding: 0 6px;
  border: 1px solid #7fa7bf;
  border-radius: 3px;
  background: #fff;
  color: #3f4954;
  font: 15px/20px "Liberation Sans", Arial, sans-serif;
}
.filter::after {
  content: "";
  position: absolute;
  right: 6px;
  border: 4px solid transparent;
  border-top: 5px solid #2c363c;
  border-bottom: 0;
}

.workspace { display: flex; flex: 1; min-height: 0; }
.navigator {
  display: grid;
  flex: none;
  grid-template: 36px minmax(0, 1fr) / 301px 11px;
  width: 312px;
  background: repeating-linear-gradient(135deg, #cfdfec 0 1px, #d5e4ee 2px 4px);
}
.tabs { display: flex; grid-column: 1 / -1; padding: 5px 0 0 9px; }
.tab { display: grid; width: 52px; height: 31px; }
.tab > svg { grid-area: 1 / 1; }
.tab-shape { width: 58px; height: 31px; overflow: visible; }
.tab-icon { width: 24px; height: 24px; margin: 3px 0 0 14px; }
.tab.selected { z-index: 1; }
.panel {
  display: flex;
  flex-direction: column;
  min-height: 0;
  padding: 0 9px 0 9px;
  border: solid #a9b5bd;
  border-width: 1px 1px 0 0;
  border-image: linear-gradient(#a9b5bd, #a9b5bd00 130px) 1;
  background: radial-gradient(220px 90px at 40px 0, #fff 10%, #ffffff00) no-repeat;
}
.panel-head { display: flex; flex: none; align-items: center; height: 38px; }
.panel-head h2 { flex: 1; margin: 0 0 4px 22px; font: bold 15px/20px "Liberation Sans", Arial, sans-serif; }
.head-tool { width: 24px; height: 24px; margin: 0 2px 2px 0; }
.head-tool svg { display: block; width: 24px; height: 24px; }
.head-tool.list { margin-left: 10px; }
.panel-head .drop { margin-right: 1px; }
.tree {
  display: grid;
  flex: 1;
  grid-template-rows: repeat(5, 22px 23px);
  align-content: start;
  margin: 0;
  padding: 1px 0 0;
  border: 1px solid #7fa7b8;
  border-bottom: 0;
  border-radius: 4px 4px 0 0;
  background: #fff;
  font: 14px/20px "Open Sans", "Noto Sans", sans-serif;
  list-style: none;
}
.tree li {
  display: flex;
  align-items: center;
  gap: 5px;
  margin-left: 15px;
  padding-left: 15px;
  background:
    repeating-linear-gradient(#a8b0b6 0 1px, transparent 1px 3px) 0 0 / 1px 100% no-repeat,
    repeating-linear-gradient(90deg, #a8b0b6 0 1px, transparent 1px 3px) 0 11px / 14px 1px no-repeat;
}
.tree li.root { gap: 6px; margin-left: 6px; padding-left: 0; background: none; }
.tree li.last { background-size: 1px 12px, 14px 1px; }
.ti { flex: none; width: 19px; height: 19px; }
.root .ti { width: 17px; height: 17px; }
.expand {
  width: 11px;
  height: 11px;
  margin-left: -20px;
  margin-right: 4px;
  border: 1px solid #a8c0d2;
  border-radius: 2px;
  background:
    linear-gradient(#222, #222) center / 7px 1px no-repeat,
    linear-gradient(#222, #222) center / 1px 7px no-repeat,
    #e4eff7;
}
.splitter {
  display: flex;
  flex-direction: column;
  gap: 11px;
  justify-content: center;
  padding: 6px 0 0 1px;
}
.handle {
  display: grid;
  place-items: center;
  height: 118px;
  border: 1px solid #b6d0e4;
  border-right: 0;
  border-radius: 4px 0 0 4px;
}
.handle::after {
  content: "";
  width: 4px;
  height: 4px;
  border-radius: 2px;
  background: #3c4a54;
}
.handle.strong {
  height: 114px;
  padding-top: 7px;
  border: 2px solid #98a4ac;
  border-right: 0;
  background: linear-gradient(90deg, #dce9f2, #bcd4e4);
}

.viewport {
  flex: 1;
  min-width: 0;
  background: linear-gradient(#c6dbeb, #a3bcd6 34%, #96b0d0 50%, #88a6c7 60%, #7e9bc0 70%, #6080ac);
}
.scene { display: block; width: 100%; height: 100%; }
.note { font: 16px Lato, sans-serif; fill: #a0703c; }

.feature-tools {
  display: flex;
  flex: none;
  gap: 1px;
  width: 85px;
  overflow: hidden;
}
.column {
  display: flex;
  flex: none;
  flex-direction: column;
  gap: 3px;
  width: 51px;
  padding: 0 0 0 1px;
}
.grip-h {
  flex: none;
  width: 50px;
  height: 5px;
  margin: 3px 0 7px;
  background: conic-gradient(#5f86a2 25%, transparent 0) 0 0 / 2px 2px;
}
.column > .grip-h:first-child { margin-top: 5px; }
.column .tool { margin-left: 1px; }
.pair { display: flex; align-items: center; gap: 7px; }
.flyout { display: grid; align-items: center; width: 8px; height: 32px; }
.flyout::after {
  content: "";
  width: 0;
  border: 4px solid transparent;
  border-left: 5px solid #2c363c;
  border-right: 0;
}
```
